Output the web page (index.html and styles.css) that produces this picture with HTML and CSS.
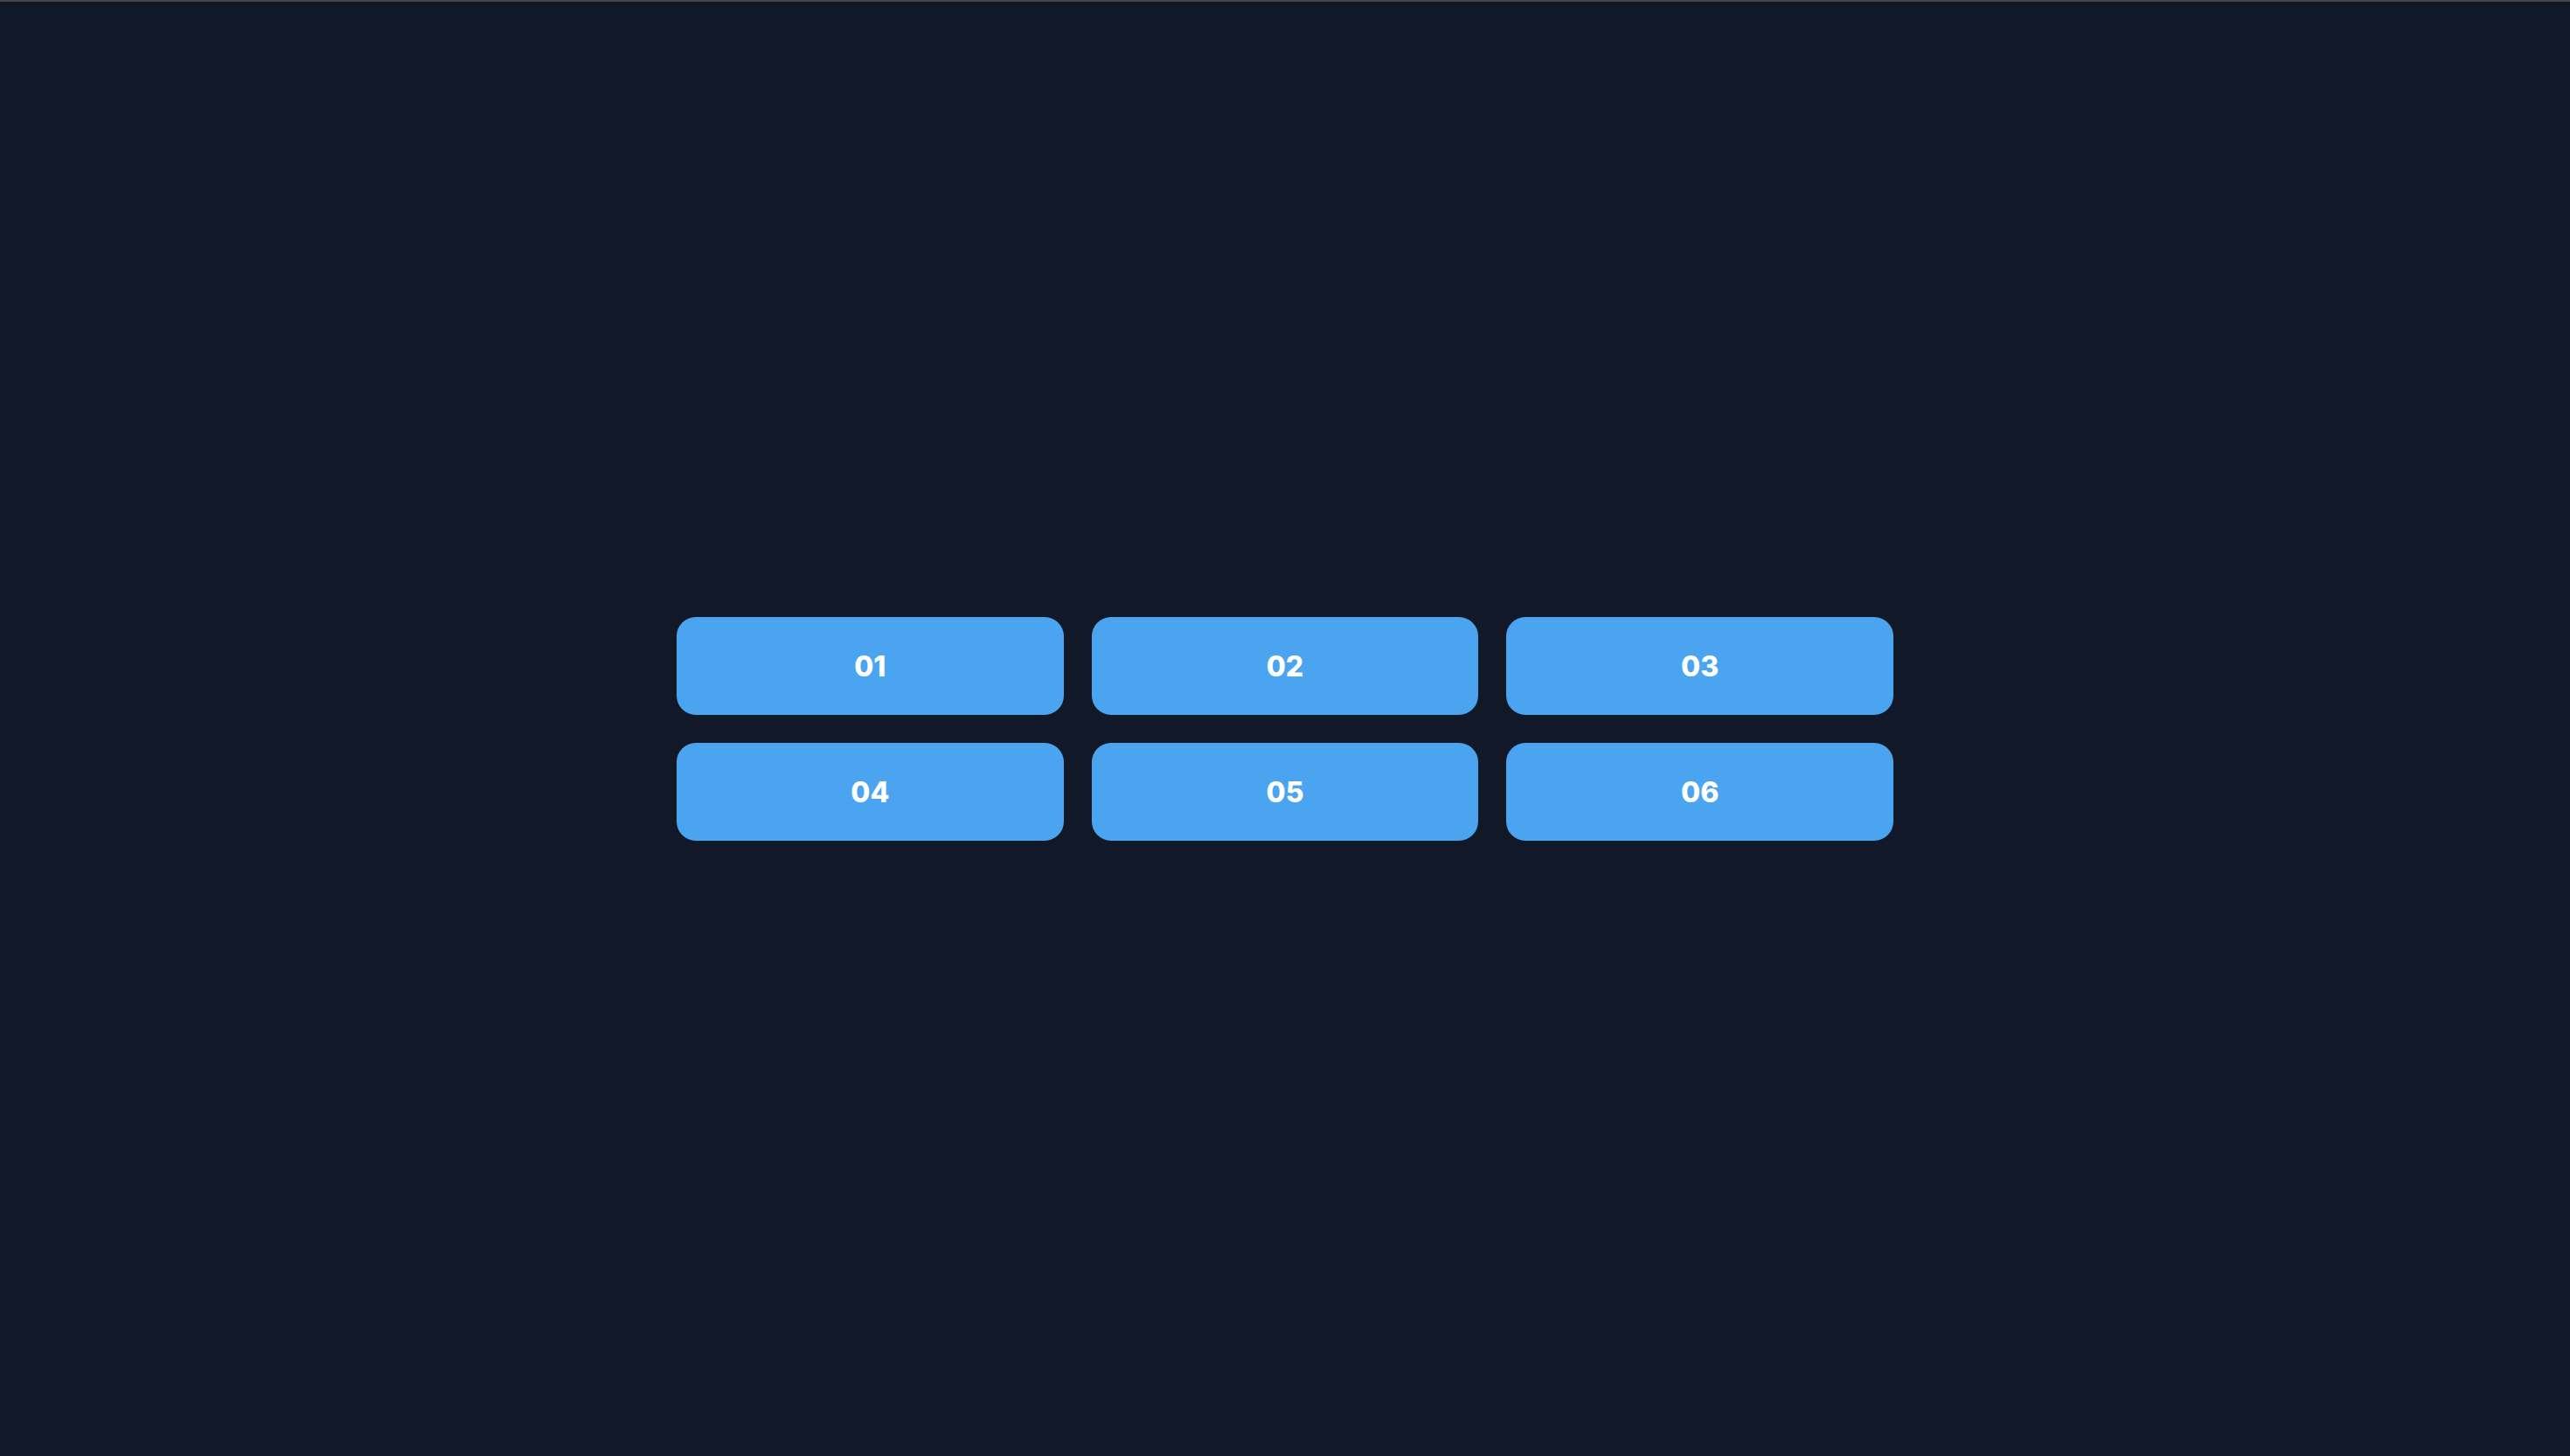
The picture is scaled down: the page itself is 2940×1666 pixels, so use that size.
FILE: index.html
```html
<!DOCTYPE html>
<html lang="en">
<head>
<meta charset="utf-8">
<title>Grid</title>
<link rel="stylesheet" href="styles.css">
</head>
<body>
<main class="stage">
  <div class="grid">
    <button class="tile">01</button>
    <button class="tile">02</button>
    <button class="tile">03</button>
    <button class="tile">04</button>
    <button class="tile">05</button>
    <button class="tile">06</button>
  </div>
</main>
</body>
</html>
```

FILE: styles.css
```css
html, body {
  margin: 0;
  padding: 0;
  height: 100%;
}
body {
  background: #111827;
  border-top: 2px solid #47434b;
  box-sizing: border-box;
  font-family: Inter, "Liberation Sans", sans-serif;
}
.stage {
  height: 100%;
  display: flex;
  align-items: center;
  justify-content: center;
}
.grid {
  width: 1392px;
  display: grid;
  grid-template-columns: repeat(3, 1fr);
  gap: 32px;
}
.tile {
  height: 112px;
  border: 0;
  border-radius: 22px;
  background: #4aa4f0;
  color: #ffffff;
  font-family: Inter, "Liberation Sans", sans-serif;
  font-weight: 800;
  font-size: 32px;
  padding: 0;
  display: flex;
  align-items: center;
  justify-content: center;
}
```
